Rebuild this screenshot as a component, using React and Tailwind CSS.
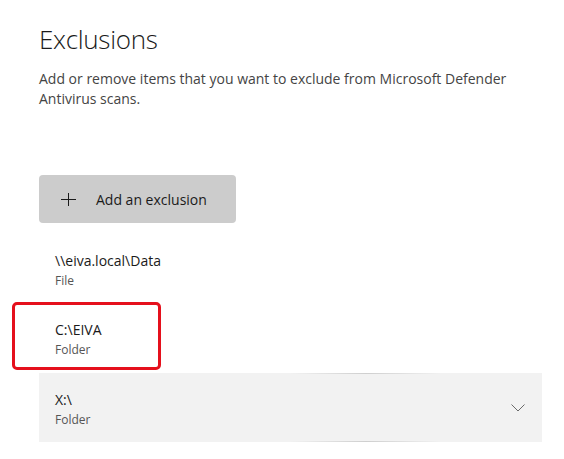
export default function App() {
  const font = { fontFamily: '"Open Sans", "Noto Sans", sans-serif' };
  return (
    <div
      className="w-[564px] h-[459px] bg-white overflow-hidden pl-[39px] flex flex-col items-start"
      style={font}
    >
      <h1 className="mt-[21px] text-[26px] leading-[36px] font-light text-[#1a1a1a] tracking-[-0.3px]">
        Exclusions
      </h1>
      <p className="mt-[12px] w-[510px] text-[14px] leading-[20px] text-[#444444]">
        Add or remove items that you want to exclude from Microsoft Defender
        <br />
        Antivirus scans.
      </p>
      <button className="mt-[66px] w-[197px] h-[48px] rounded-[4px] bg-[#cccccc] flex items-center pl-[22px] text-[14px] text-[#1a1a1a]">
        <svg width="15" height="13" viewBox="0 0 15 13" className="shrink-0">
          <path d="M7.5 0V13M0 6.5H15" stroke="#1a1a1a" strokeWidth="1" fill="none" />
        </svg>
        <span className="ml-[20px]">Add an exclusion</span>
      </button>
      <div className="mt-[12px] w-[503px] flex flex-col">
        <div className="h-[69px] pl-[16px] pt-[16px] flex flex-col">
          <span className="text-[14px] leading-[20px] text-[#1a1a1a]">\\eiva.local\Data</span>
          <span className="mt-[2px] text-[12px] leading-[16px] text-[#555555]">File</span>
        </div>
        <div className="relative h-[69px] pl-[16px] pt-[16px] flex flex-col">
          <span className="text-[14px] leading-[20px] text-[#1a1a1a]">C:\EIVA</span>
          <span className="mt-[2px] text-[12px] leading-[16px] text-[#555555]">Folder</span>
          <div className="absolute left-[-27px] top-[-2px] w-[149px] h-[68px] border-[3px] border-[#e5101c] rounded-[5px]" />
        </div>
        <div className="relative h-[69px] bg-[#f2f2f2] pl-[16px] pr-[17px] flex items-center justify-between">
          <div className="absolute left-0 right-0 top-0 h-px bg-[linear-gradient(90deg,transparent_0%,transparent_50%,#cfcfcf_65%,transparent_80%)]" />
          <div className="absolute left-0 right-0 bottom-0 h-px bg-[linear-gradient(90deg,transparent_0%,transparent_50%,#cfcfcf_65%,transparent_80%)]" />
          <div className="flex flex-col pt-[2px]">
            <span className="text-[14px] leading-[20px] text-[#1a1a1a]">X:\</span>
            <span className="mt-[2px] text-[12px] leading-[16px] text-[#555555]">Folder</span>
          </div>
          <svg width="14" height="8" viewBox="0 0 14 8">
            <path d="M0.5 0.5L7 7L13.5 0.5" stroke="#6a6a6a" strokeWidth="1" fill="none" />
          </svg>
        </div>
      </div>
    </div>
  );
}
